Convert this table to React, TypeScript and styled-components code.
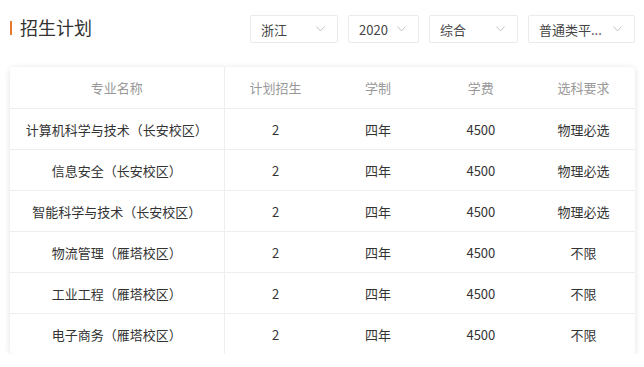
import styled, { createGlobalStyle } from "styled-components";

const GlobalStyle = createGlobalStyle`
  html, body {
    margin: 0;
    padding: 0;
    background: #fff;
    font-family: "Noto Sans CJK SC", "Noto Sans", sans-serif;
    color: #333;
  }
`;

const Page = styled.div`
  padding: 15px 9px 0 10px;
`;

const Header = styled.div`
  display: flex;
  align-items: center;
  height: 28px;
`;

const Title = styled.h2`
  display: flex;
  align-items: center;
  gap: 8px;
  margin: 0;
  margin-top: -4px;
  font-size: 18px;
  font-weight: normal;
  color: #333;
  line-height: 24px;
  &::before {
    content: "";
    display: block;
    width: 2px;
    height: 14px;
    background: #e8772e;
    margin-top: 2px;
  }
`;

const Filters = styled.div`
  display: flex;
  gap: 10px;
  margin-left: auto;
`;

const Select = styled.div<{ width: number }>`
  display: flex;
  align-items: center;
  justify-content: space-between;
  box-sizing: border-box;
  width: ${(p) => p.width}px;
  height: 28px;
  padding: 0 12px 0 10px;
  border: 1px solid #ebebeb;
  border-radius: 2px;
  font-size: 13px;
  color: #444;
  line-height: 1;
`;

const Card = styled.div`
  margin-top: 24px;
  border-radius: 4px;
  background: #fff;
  box-shadow: 0 1px 6px rgba(0, 0, 0, 0.12);
  overflow: hidden;
`;

const Table = styled.table`
  width: 100%;
  border-collapse: collapse;
  table-layout: fixed;
  font-size: 13px;
`;

const Th = styled.th<{ first?: boolean }>`
  height: 41px;
  padding: 0;
  font-weight: normal;
  color: #999;
  border-bottom: 1px solid #eee;
  border-right: ${(p) => (p.first ? "1px solid #eee" : "none")};
`;

const Td = styled.td<{ first?: boolean; last?: boolean }>`
  height: 40px;
  padding: 0;
  text-align: center;
  color: #333;
  border-bottom: ${(p) => (p.last ? "none" : "1px solid #eee")};
  border-right: ${(p) => (p.first ? "1px solid #eee" : "none")};
`;

const Chevron = () => (
  <svg width="9" height="6" viewBox="0 0 9 6">
    <polyline points="0.5,0.5 4.5,5 8.5,0.5" fill="none" stroke="#c4c4c4" strokeWidth="1" />
  </svg>
);

const filters = [
  { label: "浙江", width: 88 },
  { label: "2020", width: 71 },
  { label: "综合", width: 89 },
  { label: "普通类平...", width: 107 },
];

const majors = [
  { name: "计算机科学与技术（长安校区）", req: "物理必选" },
  { name: "信息安全（长安校区）", req: "物理必选" },
  { name: "智能科学与技术（长安校区）", req: "物理必选" },
  { name: "物流管理（雁塔校区）", req: "不限" },
  { name: "工业工程（雁塔校区）", req: "不限" },
  { name: "电子商务（雁塔校区）", req: "不限" },
];

export default function App() {
  return (
    <>
      <GlobalStyle />
      <Page>
        <Header>
          <Title>招生计划</Title>
          <Filters>
            {filters.map((f) => (
              <Select key={f.label} width={f.width}>
                <span>{f.label}</span>
                <Chevron />
              </Select>
            ))}
          </Filters>
        </Header>
        <Card>
          <Table>
            <colgroup>
              <col style={{ width: 214 }} />
              <col />
              <col />
              <col />
              <col />
            </colgroup>
            <thead>
              <tr>
                <Th first>专业名称</Th>
                <Th>计划招生</Th>
                <Th>学制</Th>
                <Th>学费</Th>
                <Th>选科要求</Th>
              </tr>
            </thead>
            <tbody>
              {majors.map((m, i) => {
                const last = i === majors.length - 1;
                return (
                  <tr key={m.name}>
                    <Td first last={last}>{m.name}</Td>
                    <Td last={last}>2</Td>
                    <Td last={last}>四年</Td>
                    <Td last={last}>4500</Td>
                    <Td last={last}>{m.req}</Td>
                  </tr>
                );
              })}
            </tbody>
          </Table>
        </Card>
      </Page>
    </>
  );
}
